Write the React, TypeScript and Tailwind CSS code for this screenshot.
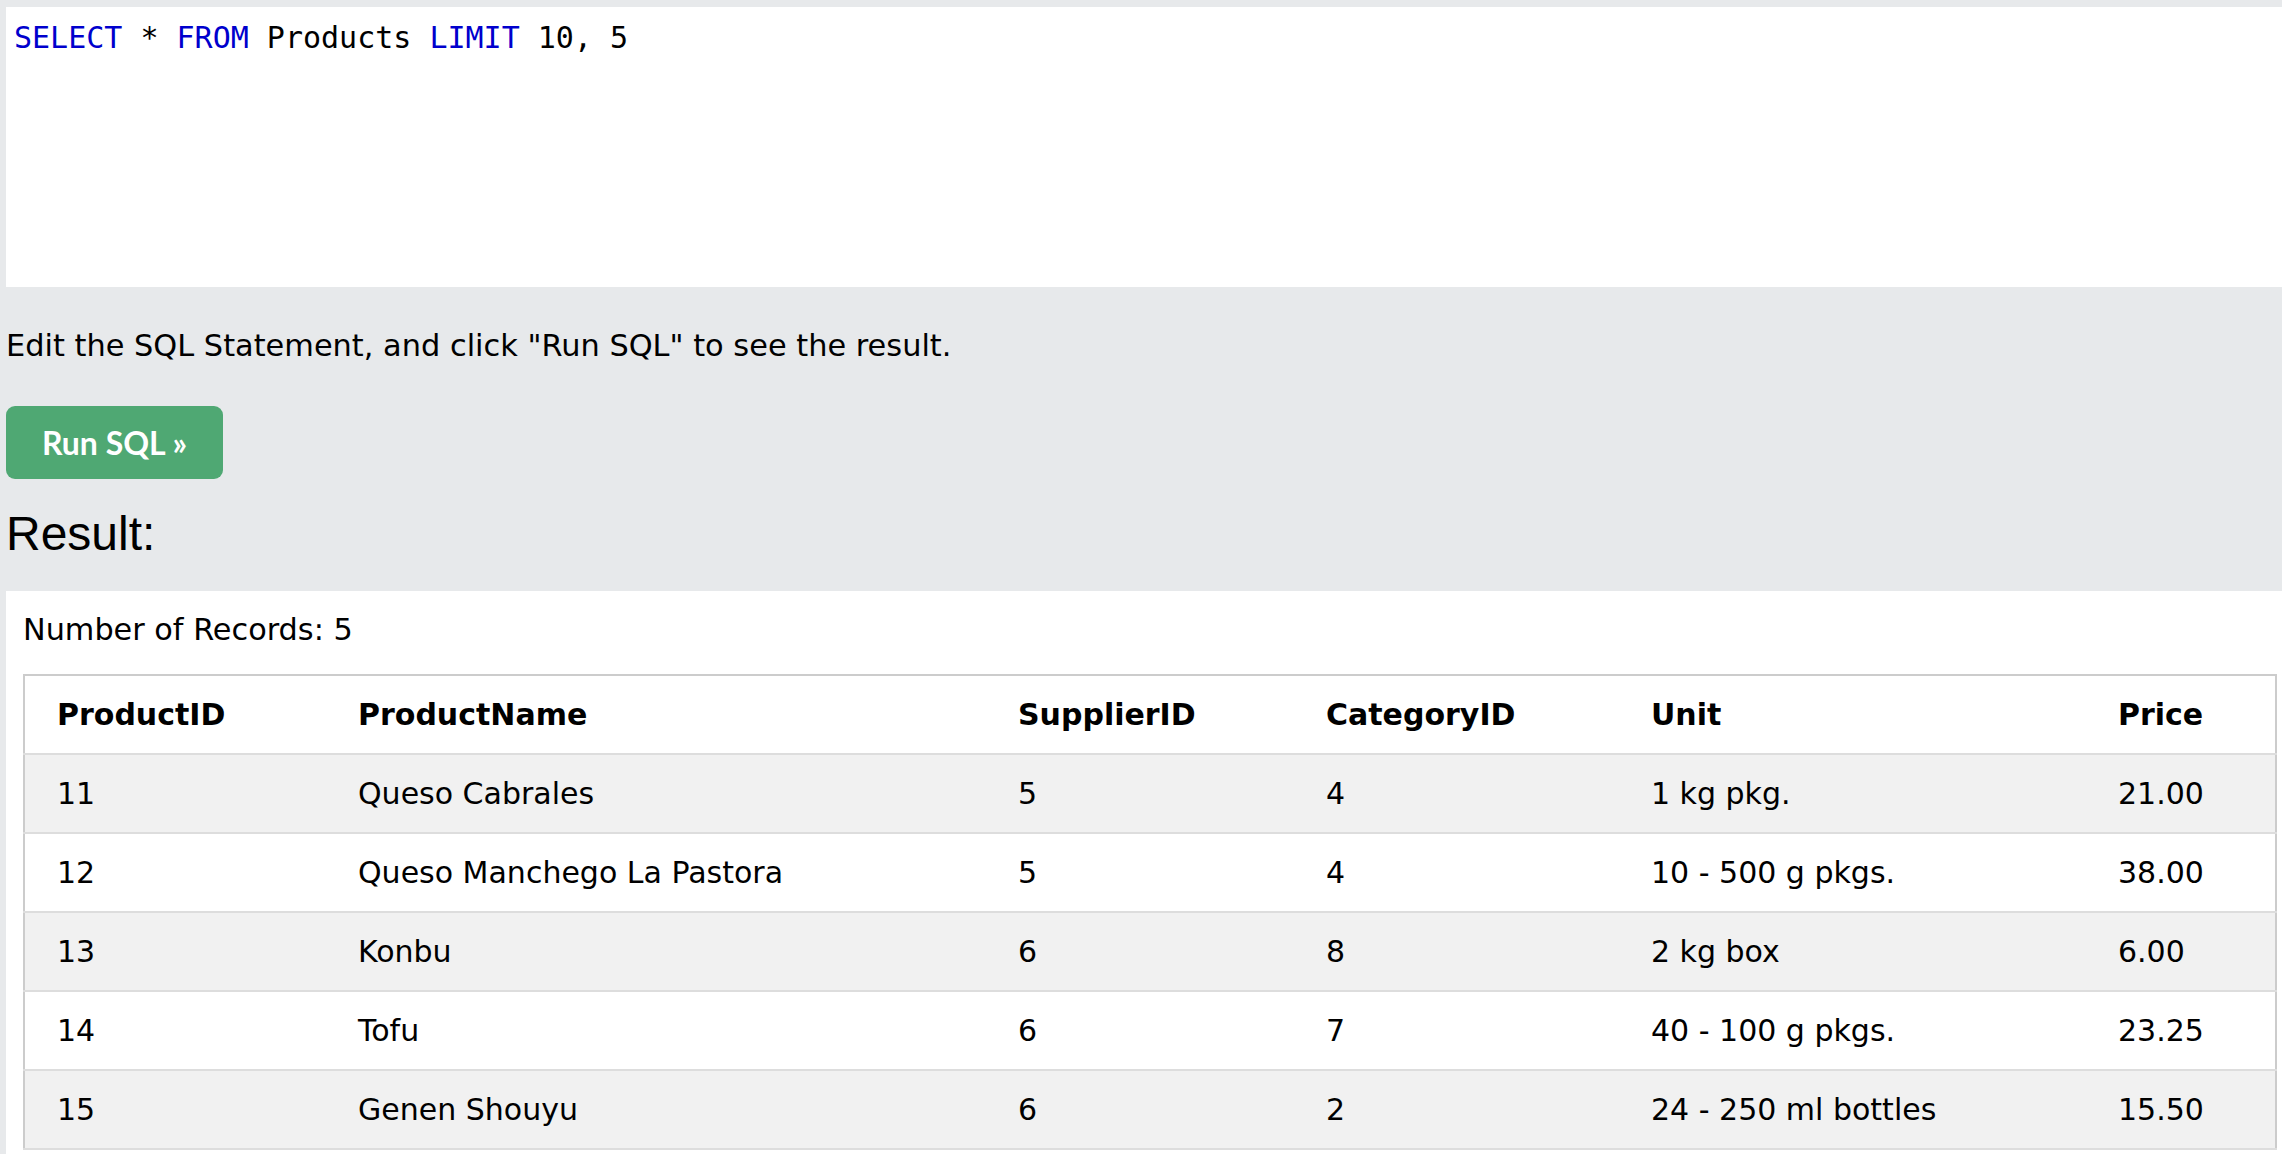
const rows = [
  { id: '11', name: 'Queso Cabrales', supplier: '5', category: '4', unit: '1 kg pkg.', price: '21.00' },
  { id: '12', name: 'Queso Manchego La Pastora', supplier: '5', category: '4', unit: '10 - 500 g pkgs.', price: '38.00' },
  { id: '13', name: 'Konbu', supplier: '6', category: '8', unit: '2 kg box', price: '6.00' },
  { id: '14', name: 'Tofu', supplier: '6', category: '7', unit: '40 - 100 g pkgs.', price: '23.25' },
  { id: '15', name: 'Genen Shouyu', supplier: '6', category: '2', unit: '24 - 250 ml bottles', price: '15.50' },
];

const App = () => {
  return (
    <div className="min-h-screen bg-[#e7e9eb] pl-[6px] pt-[7px] font-['DejaVu_Sans',sans-serif] text-black">
      {/* SQL editor */}
      <div className="h-[280px] bg-white pl-[8px] pt-[13px]">
        <div className="font-['DejaVu_Sans_Mono',monospace] text-[30px] leading-[36px] whitespace-pre">
          <span className="text-[#0000cd]">SELECT</span> * <span className="text-[#0000cd]">FROM</span> Products{' '}
          <span className="text-[#0000cd]">LIMIT</span> 10, 5
        </div>
      </div>

      <p className="mt-[36px] text-[30.4px] leading-[45px]">
        Edit the SQL Statement, and click "Run SQL" to see the result.
      </p>

      <button className="mt-[38px] flex h-[73px] w-[217px] items-center justify-center rounded-[9px] bg-[#4fa873] font-['Lato',sans-serif] text-[32px] font-bold text-white">
        Run SQL »
      </button>

      <h2 className="mt-[27px] font-['Liberation_Sans',Arial,sans-serif] text-[48px] leading-[56px]">Result:</h2>

      {/* Result panel */}
      <div className="mt-[29px] bg-white pb-[20px] pl-[17px] pr-[5px] pt-[16px]">
        <div className="text-[30.3px] leading-[45px]">Number of Records: 5</div>
        <table className="mt-[22px] w-full table-fixed border-collapse border-2 border-[#cccccc] text-left text-[30px] leading-[45px]">
          <colgroup>
            <col className="w-[318px]" />
            <col className="w-[660px]" />
            <col className="w-[308px]" />
            <col className="w-[325px]" />
            <col className="w-[467px]" />
            <col />
          </colgroup>
          <thead>
            <tr className="border-b-2 border-[#dddddd] bg-white font-bold">
              <th className="py-[16px] pl-[32px]">ProductID</th>
              <th className="py-[16px] pl-[16px]">ProductName</th>
              <th className="py-[16px] pl-[16px]">SupplierID</th>
              <th className="py-[16px] pl-[16px]">CategoryID</th>
              <th className="py-[16px] pl-[16px]">Unit</th>
              <th className="py-[16px] pl-[16px]">Price</th>
            </tr>
          </thead>
          <tbody>
            {rows.map((r, i) => (
              <tr key={r.id} className={i % 2 === 0 ? 'border-b-2 border-[#dddddd] bg-[#f1f1f1]' : 'border-b-2 border-[#dddddd] bg-white'}>
                <td className="py-[16px] pl-[32px]">{r.id}</td>
                <td className="py-[16px] pl-[16px]">{r.name}</td>
                <td className="py-[16px] pl-[16px]">{r.supplier}</td>
                <td className="py-[16px] pl-[16px]">{r.category}</td>
                <td className="py-[16px] pl-[16px]">{r.unit}</td>
                <td className="py-[16px] pl-[16px]">{r.price}</td>
              </tr>
            ))}
          </tbody>
        </table>
      </div>
    </div>
  );
};

export default App;
